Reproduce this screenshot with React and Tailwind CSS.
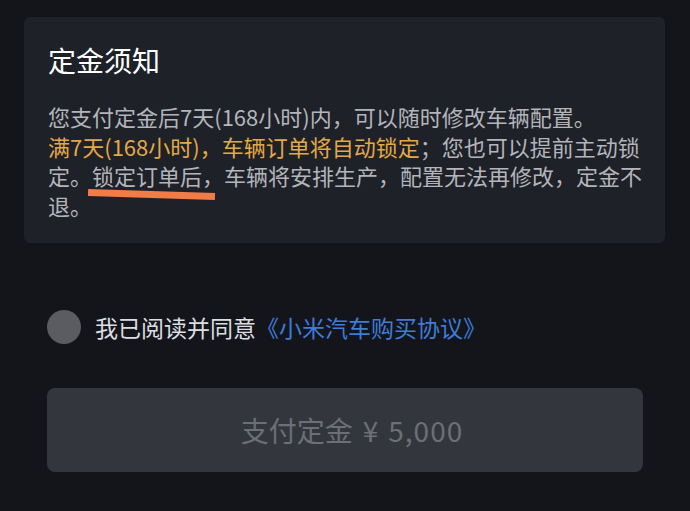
export default function App() {
  return (
    <div
      className="min-h-[511px] w-[690px] bg-[#13151b] pt-[17px] pb-10"
      style={{ fontFamily: '"Noto Sans CJK SC", "Noto Sans", sans-serif' }}
    >
      <div className="ml-[24px] w-[641px] rounded-[6px] bg-[#1e2128] px-6 pt-6 pb-[23px]">
        <h2 className="text-[28px] leading-[38px] font-normal text-white">定金须知</h2>
        <div className="mt-[23px] text-[22px] leading-[29.5px] text-[#b3b5ba] whitespace-nowrap">
          <div>您支付定金后7天(168小时)内，可以随时修改车辆配置。</div>
          <div>
            <span className="text-[#e3a847]">满7天(168小时)，车辆订单将自动锁定</span>
            ；您也可以提前主动锁
          </div>
          <div>
            定。
            <span className="relative">
              锁定订单后，
              <span className="absolute left-[-4px] top-[32px] h-[7px] w-[127px] rotate-[1.8deg] bg-[#f27b47]"></span>
            </span>
            车辆将安排生产，配置无法再修改，定金不
          </div>
          <div>退。</div>
        </div>
      </div>

      <div className="mt-[67px] ml-[47px] flex items-center gap-[14px]">
        <div className="h-[34px] w-[34px] rounded-full bg-[#5a5c61]"></div>
        <div className="text-[23px] leading-[32px] text-[#dcdee1]">
          我已阅读并同意<span className="text-[#3d7cd8]">《小米汽车购买协议》</span>
        </div>
      </div>

      <button className="mt-[44px] ml-[47px] flex h-[84px] w-[596px] items-center justify-center rounded-[8px] bg-[#34363e] pl-[14px] text-[28px] text-[#6c6f75]">
        <span>支付定金</span>
        <span className="ml-[10px]">¥</span>
        <span className="ml-[10px] tracking-[1px]">5,000</span>
      </button>
    </div>
  );
}
